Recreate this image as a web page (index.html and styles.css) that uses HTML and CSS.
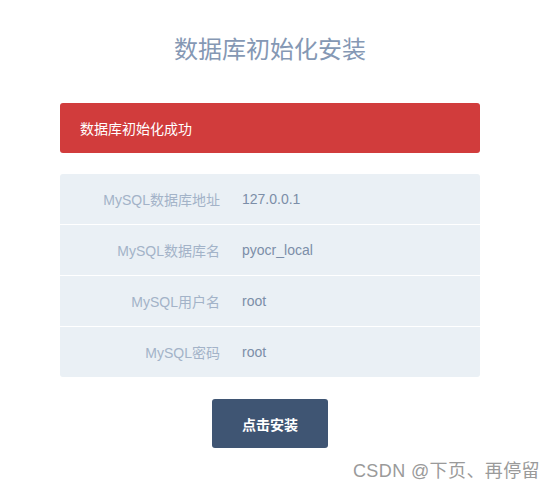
FILE: index.html
```html
<!DOCTYPE html>
<html lang="zh-CN">
<head>
<meta charset="utf-8">
<title>数据库初始化安装</title>
<link rel="stylesheet" href="styles.css">
</head>
<body>
<div class="page">
  <h1 class="title">数据库初始化安装</h1>
  <div class="alert">数据库初始化成功</div>
  <div class="table">
    <div class="row"><div class="label">MySQL数据库地址</div><div class="value">127.0.0.1</div></div>
    <div class="row"><div class="label">MySQL数据库名</div><div class="value">pyocr_local</div></div>
    <div class="row"><div class="label">MySQL用户名</div><div class="value">root</div></div>
    <div class="row"><div class="label">MySQL密码</div><div class="value">root</div></div>
  </div>
  <div class="actions"><button class="btn">点击安装</button></div>
</div>
<div class="watermark">CSDN @下页、再停留</div>
</body>
</html>
```
FILE: styles.css
```css
html, body {
  margin: 0;
  padding: 0;
  background: #ffffff;
}
body {
  font-family: "Liberation Sans", "Noto Sans CJK SC", sans-serif;
  width: 555px;
  height: 490px;
  position: relative;
  overflow: hidden;
}
.page {
  width: 420px;
  margin-left: 60px;
  padding-top: 35px;
}
.title {
  margin: 0;
  font-size: 24px;
  line-height: 30px;
  font-weight: normal;
  color: #8598b4;
  text-align: center;
}
.alert {
  margin-top: 38px;
  height: 50px;
  box-sizing: border-box;
  padding-left: 20px;
  display: flex;
  align-items: center;
  background: #d13c3c;
  border-radius: 3px;
  color: #ffffff;
  font-size: 14px;
}
.table {
  margin-top: 21px;
  background: #eaf0f5;
  border-radius: 3px;
  overflow: hidden;
}
.row {
  display: grid;
  grid-template-columns: 160px 1fr;
  column-gap: 22px;
  height: 50px;
  align-items: center;
  font-size: 14px;
}
.row + .row {
  border-top: 1px solid #ffffff;
}
.label {
  text-align: right;
  color: #a3b3c8;
}
.value {
  color: #7c8ea8;
}
.actions {
  display: flex;
  justify-content: center;
  margin-top: 22px;
}
.btn {
  width: 116px;
  height: 49px;
  border: none;
  border-radius: 3px;
  background: #3f5573;
  color: #ffffff;
  font-family: "Liberation Sans", "Noto Sans CJK SC", sans-serif;
  font-size: 14px;
  font-weight: bold;
}
.watermark {
  position: absolute;
  right: 15px;
  top: 460px;
  font-size: 18px;
  line-height: 22px;
  letter-spacing: 0.4px;
  color: #9a9a9a;
  font-family: "Liberation Sans", "Noto Sans CJK SC", sans-serif;
}
```
